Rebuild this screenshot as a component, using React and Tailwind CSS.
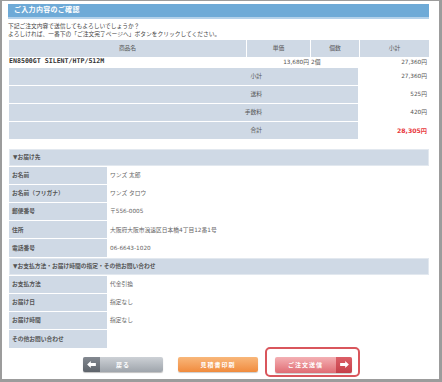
import React from 'react';

const font = { fontFamily: '"DejaVu Sans","Noto Sans CJK JP",sans-serif' };

const items = [
  { label: '小計', value: '27,360円' },
  { label: '送料', value: '525円' },
  { label: '手数料', value: '420円' },
  { label: '合計', value: '28,305円', total: true },
];

const sections = [
  {
    title: '▼お届け先',
    rows: [
      ['お名前', 'ワンズ 太郎'],
      ['お名前（フリガナ）', 'ワンズ タロウ'],
      ['郵便番号', '〒556-0005'],
      ['住所', '大阪府大阪市浪速区日本橋4丁目12番1号'],
      ['電話番号', '06-6643-1020'],
    ],
  },
  {
    title: '▼お支払方法・お届け時間の指定・その他お問い合わせ',
    rows: [
      ['お支払方法', '代金引換'],
      ['お届け日', '指定なし'],
      ['お届け時間', '指定なし'],
      ['その他お問い合わせ', ''],
    ],
  },
];

function Arrow({ dir }) {
  return (
    <svg width="9" height="7" viewBox="0 0 10 8" className={dir === 'right' ? 'rotate-180' : ''}>
      <path d="M0 4 L4.2 0 V2.3 H10 V5.7 H4.2 V8 Z" fill="#fff" />
    </svg>
  );
}

export default function App() {
  return (
    <div
      className="w-[442px] h-[382px] overflow-hidden bg-white border-t border-l-2 border-r-[3px] border-b-[3px] border-[#9c9c9c] text-[#555] text-[5.75px]"
      style={font}
    >
      <div className="ml-[6px] mt-[3px] w-[421px] h-[15px] bg-[#6eaad7] border-b-2 border-[#b3d1ea] flex items-center pl-[6px]">
        <span className="text-white font-bold text-[7px] tracking-[0.3px]">ご入力内容のご確認</span>
      </div>

      <div className="ml-[6px] mt-[3px] leading-[8px] text-[#444]">
        <p>下記ご注文内容で送信してもよろしいでしょうか？</p>
        <p>よろしければ、一番下の「ご注文完了ページへ」ボタンをクリックしてください。</p>
      </div>

      <div className="ml-[7px] mt-[2px] w-[420px] flex flex-col">
        <div className="grid grid-cols-[237px_63px_48px_69px] gap-px h-[17px]">
          {['商品名', '単価', '個数', '小計'].map((h) => (
            <div key={h} className="bg-[#cfd9e5] flex items-center justify-center">{h}</div>
          ))}
        </div>
        <div className="grid grid-cols-[237px_63px_48px_69px] gap-px h-[10px] items-center">
          <div className="font-bold text-[6.6px] text-[#333]" style={{ fontFamily: '"DejaVu Sans Mono",monospace' }}>
            EN8500GT SILENT/HTP/512M
          </div>
          <div className="text-right pr-[1px]">13,680円</div>
          <div>2個</div>
          <div className="text-right pr-[2px]">27,360円</div>
        </div>
        <div className="flex flex-col gap-[1.5px] mt-px">
          {items.map((it) => (
            <div key={it.label} className="grid grid-cols-[349px_70px] gap-px h-[16.5px]">
              <div className="bg-[#cfd9e5] flex items-center justify-end pr-[96px]">{it.label}</div>
              <div
                className={
                  'flex items-center justify-end pr-[2px] ' +
                  (it.total ? 'text-[#e8383d] font-bold text-[6.2px]' : '')
                }
              >
                {it.value}
              </div>
            </div>
          ))}
        </div>
      </div>

      <div className="ml-[7px] mt-[10px] w-[420px] flex flex-col gap-px">
        {sections.map((s) => (
          <React.Fragment key={s.title}>
            <div className="h-[17.2px] bg-[#cfd9e5] border border-[#e2e8ef] flex items-center pl-[3px] font-bold">
              {s.title}
            </div>
            {s.rows.map(([l, v]) => (
              <div key={l} className="grid grid-cols-[98px_321px] gap-px h-[17.2px]">
                <div className="bg-[#cfd9e5] flex items-center pl-[3px] font-bold">{l}</div>
                <div className="flex items-center pl-[2px] text-[#666]">{v}</div>
              </div>
            ))}
          </React.Fragment>
        ))}
      </div>

      <div className="mt-[-1px] flex justify-center items-start pl-[2px]">
        <button className="mt-[10px] w-[80px] h-[15px] rounded-[2px] flex overflow-hidden bg-gradient-to-b from-[#cdd1d6] to-[#9fa5ac] shadow-[0_1px_1px_rgba(0,0,0,0.25)]">
          <span className="w-[17px] h-full bg-gradient-to-b from-[#838991] to-[#5e646b] flex items-center justify-center">
            <Arrow dir="left" />
          </span>
          <span className="flex-1 h-full flex items-center justify-center pr-[17px] text-white font-bold text-[6px] tracking-[1px]">
            戻る
          </span>
        </button>
        <button className="mt-[10px] ml-[15px] w-[80px] h-[15px] rounded-[2px] flex items-center justify-center bg-gradient-to-b from-[#f8b77a] to-[#f08b3c] shadow-[0_1px_1px_rgba(0,0,0,0.2)] text-white font-bold text-[6px] tracking-[1px]">
          見積書印刷
        </button>
        <div className="ml-[7px] h-[30px] border-2 border-[#d9565c] rounded-[5px] pt-[8px] pl-[8px] pr-[6px]">
          <button className="w-[77px] h-[16px] rounded-[2px] flex overflow-hidden bg-gradient-to-b from-[#f3b0b4] to-[#df6c74] shadow-[0_1px_1px_rgba(0,0,0,0.2)]">
            <span className="flex-1 h-full flex items-center justify-center text-white font-bold text-[6px] tracking-[1px]">
              ご注文送信
            </span>
            <span className="w-[16px] h-full bg-gradient-to-b from-[#dc5f67] to-[#c53f49] flex items-center justify-center">
              <Arrow dir="right" />
            </span>
          </button>
        </div>
      </div>
    </div>
  );
}
